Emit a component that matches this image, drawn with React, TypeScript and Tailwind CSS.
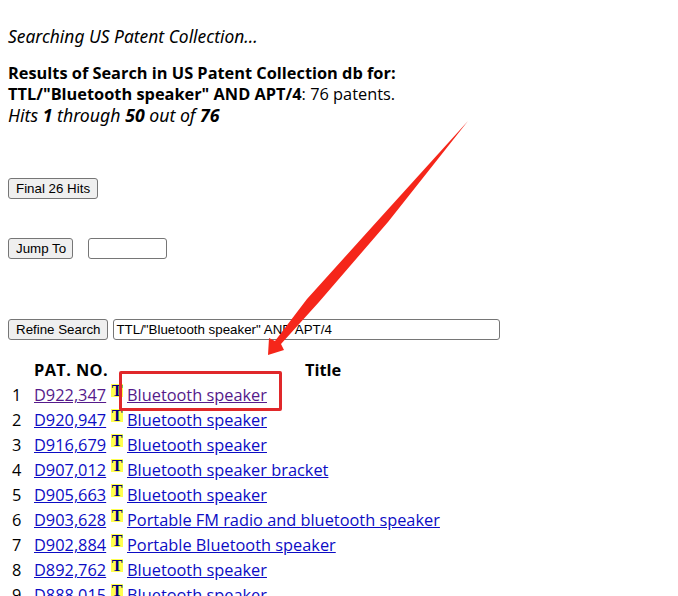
const rows: [string, string, string][] = [
  ["1", "D922,347", "Bluetooth speaker"],
  ["2", "D920,947", "Bluetooth speaker"],
  ["3", "D916,679", "Bluetooth speaker"],
  ["4", "D907,012", "Bluetooth speaker bracket"],
  ["5", "D905,663", "Bluetooth speaker"],
  ["6", "D903,628", "Portable FM radio and bluetooth speaker"],
  ["7", "D902,884", "Portable Bluetooth speaker"],
  ["8", "D892,762", "Bluetooth speaker"],
  ["9", "D888,015", "Bluetooth speaker"],
];

const btn =
  "h-[21px] whitespace-nowrap rounded-[3px] border border-[#767676] bg-[#efefef] px-[7px] text-[13.33px] leading-none text-black font-['Liberation_Sans',Arial,sans-serif]";
const field =
  "h-[21px] rounded-[3px] border border-[#767676] bg-white px-[2px] text-[13.33px] leading-none text-black font-['Liberation_Sans',Arial,sans-serif]";

function TIcon() {
  return (
    <span className="relative mt-[-10px] flex h-[13px] w-[12px] items-start justify-center bg-[#ffff4d]">
      <span className="font-['Liberation_Serif',serif] text-[16px] font-bold leading-[13px] text-[#000080]">T</span>
    </span>
  );
}

export default function App() {
  return (
    <div className="relative h-[596px] w-[678px] overflow-hidden bg-white text-[16.35px] leading-[21px] text-black font-['Open_Sans','Noto_Sans',sans-serif]">
      <div className="px-2 pt-[26px]">
        <p className="italic text-[17.4px] font-['Noto_Sans',sans-serif]">Searching US Patent Collection...</p>
        <div className="mt-[16px]">
          <p className="font-bold">Results of Search in US Patent Collection db for:</p>
          <p>
            <b>TTL/"Bluetooth speaker" AND APT/4</b>: 76 patents.
          </p>
          <p className="italic text-[17.7px] font-['Noto_Sans',sans-serif]">
            Hits <b>1</b> through <b>50</b> out of <b>76</b>
          </p>
        </div>
        <div className="mt-[51px]">
          <button className={btn}>Final 26 Hits</button>
        </div>
        <div className="mt-[39px] flex items-center gap-[15px]">
          <button className={`${btn} w-[65px] px-0`}>Jump To</button>
          <input className={`${field} w-[79px]`} />
        </div>
        <div className="mt-[60px] flex items-center gap-[5px]">
          <button className={btn}>Refine Search</button>
          <input className={`${field} w-[387px]`} defaultValue={'TTL/"Bluetooth speaker" AND APT/4'} />
        </div>
        <div className="mt-[18px] flex h-[25px] items-center font-bold">
          <span className="ml-[26px] w-[271px] tracking-[0.4px]">PAT. NO.</span>
          <span>Title</span>
        </div>
        <div className="flex flex-col">
          {rows.map(([n, pat, title], i) => (
            <div key={n} className="flex h-[25px] items-center">
              <span className="w-[26px] pl-[4px]">{n}</span>
              <a href="#" className={`w-[77px] underline ${i === 0 ? "text-[#551a8b]" : "text-[#0c0cc4]"}`}>
                {pat}
              </a>
              <span className="w-[16px]">
                <TIcon />
              </span>
              <a href="#" className={`underline ${i === 0 ? "text-[#551a8b]" : "text-[#0c0cc4]"}`}>
                {title}
              </a>
            </div>
          ))}
        </div>
      </div>
      <div className="absolute left-[119px] top-[371px] h-[40px] w-[163px] rounded-[2px] border-[3px] border-[#e0282a]" />
      <svg className="absolute left-0 top-0" width="678" height="596" viewBox="0 0 678 596" fill="none">
        <path d="M468 121 L388 222 L319 302 L281 344 L284 350 L268 355 L269 338 L275 341 L307 299 L381 217 Z" fill="#f5261a" />
      </svg>
    </div>
  );
}
